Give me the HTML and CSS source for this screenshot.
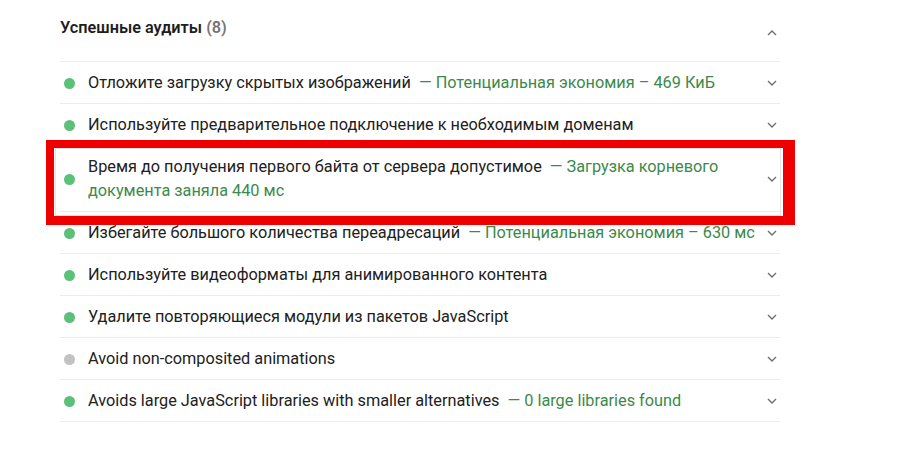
FILE: index.html
```html
<!DOCTYPE html>
<html lang="ru">
<head>
<meta charset="utf-8">
<link rel="stylesheet" href="styles.css">
</head>
<body>
<div class="group">
  <div class="group-header">
    <div class="group-title">Успешные аудиты <span class="count">(8)</span></div>
    <svg class="chev" width="12" height="8" viewBox="0 0 12 8"><polyline points="2,6 6,2 10,6" fill="none" stroke="#6f6f6f" stroke-width="1.4"/></svg>
  </div>
  <div class="audit">
    <span class="dot pass"></span>
    <div class="text">Отложите загрузку скрытых изображений <span class="disp">— Потенциальная экономия – 469 КиБ</span></div>
    <svg class="chev" width="12" height="8" viewBox="0 0 12 8"><polyline points="2,2 6,6 10,2" fill="none" stroke="#6f6f6f" stroke-width="1.4"/></svg>
  </div>
  <div class="audit">
    <span class="dot pass"></span>
    <div class="text">Используйте предварительное подключение к необходимым доменам</div>
    <svg class="chev" width="12" height="8" viewBox="0 0 12 8"><polyline points="2,2 6,6 10,2" fill="none" stroke="#6f6f6f" stroke-width="1.4"/></svg>
  </div>
  <div class="audit focused">
    <span class="dot pass"></span>
    <div class="text">Время до получения первого байта от сервера допустимое <span class="disp">— Загрузка корневого документа заняла 440 мс</span></div>
    <svg class="chev" width="12" height="8" viewBox="0 0 12 8"><polyline points="2,2 6,6 10,2" fill="none" stroke="#6f6f6f" stroke-width="1.4"/></svg>
    <div class="redbox"></div>
  </div>
  <div class="audit">
    <span class="dot pass"></span>
    <div class="text">Избегайте большого количества переадресаций <span class="disp">— Потенциальная экономия – 630 мс</span></div>
    <svg class="chev" width="12" height="8" viewBox="0 0 12 8"><polyline points="2,2 6,6 10,2" fill="none" stroke="#6f6f6f" stroke-width="1.4"/></svg>
  </div>
  <div class="audit">
    <span class="dot pass"></span>
    <div class="text">Используйте видеоформаты для анимированного контента</div>
    <svg class="chev" width="12" height="8" viewBox="0 0 12 8"><polyline points="2,2 6,6 10,2" fill="none" stroke="#6f6f6f" stroke-width="1.4"/></svg>
  </div>
  <div class="audit">
    <span class="dot pass"></span>
    <div class="text">Удалите повторяющиеся модули из пакетов JavaScript</div>
    <svg class="chev" width="12" height="8" viewBox="0 0 12 8"><polyline points="2,2 6,6 10,2" fill="none" stroke="#6f6f6f" stroke-width="1.4"/></svg>
  </div>
  <div class="audit">
    <span class="dot na"></span>
    <div class="text">Avoid non-composited animations</div>
    <svg class="chev" width="12" height="8" viewBox="0 0 12 8"><polyline points="2,2 6,6 10,2" fill="none" stroke="#6f6f6f" stroke-width="1.4"/></svg>
  </div>
  <div class="audit last">
    <span class="dot pass"></span>
    <div class="text">Avoids large JavaScript libraries with smaller alternatives <span class="disp">— 0 large libraries found</span></div>
    <svg class="chev" width="12" height="8" viewBox="0 0 12 8"><polyline points="2,2 6,6 10,2" fill="none" stroke="#6f6f6f" stroke-width="1.4"/></svg>
  </div>
</div>
</body>
</html>
```
FILE: styles.css
```css
html, body {
  margin: 0;
  padding: 0;
  background: #ffffff;
}
body {
  font-family: Roboto, "Liberation Sans", sans-serif;
  color: #212121;
  font-size: 16.3px;
}
.group {
  margin-left: 60px;
  width: 720px;
}
.group-header {
  height: 61px;
  display: flex;
  align-items: flex-start;
  justify-content: space-between;
}
.group-title {
  font-weight: 600;
  font-size: 16.3px;
  line-height: 24px;
  margin-top: 16px;
  color: #1e1e1e;
}
.count {
  color: #757575;
}
.group-header .chev {
  margin-top: 29px;
  margin-right: 2px;
}
.audit {
  position: relative;
  display: flex;
  align-items: center;
  border-top: 1px solid #ececec;
  padding: 9px 0 8px;
  line-height: 24px;
}
.audit.last {
  border-bottom: 1px solid #ececec;
}
.dot {
  flex: none;
  width: 11px;
  height: 11px;
  border-radius: 50%;
  margin-left: 4px;
  margin-right: 13px;
}
.dot.pass { background: #5cc178; }
.dot.na { background: #c2c2c2; }
.text {
  flex: 1;
  padding-right: 6px;
}
.disp {
  color: #3b8a4a;
  margin-left: 4px;
}
.chev {
  flex: none;
  margin-right: 2px;
}
.focused::before {
  content: "";
  position: absolute;
  left: -5px;
  right: -1px;
  top: 2px;
  bottom: -5px;
  border: 1px solid #e4e4e4;
}
.redbox {
  position: absolute;
  left: -14px;
  top: -6px;
  width: 729px;
  height: 68px;
  border-style: solid;
  border-color: #ee0000;
  border-width: 8px 12px 9px 8px;
}
```
